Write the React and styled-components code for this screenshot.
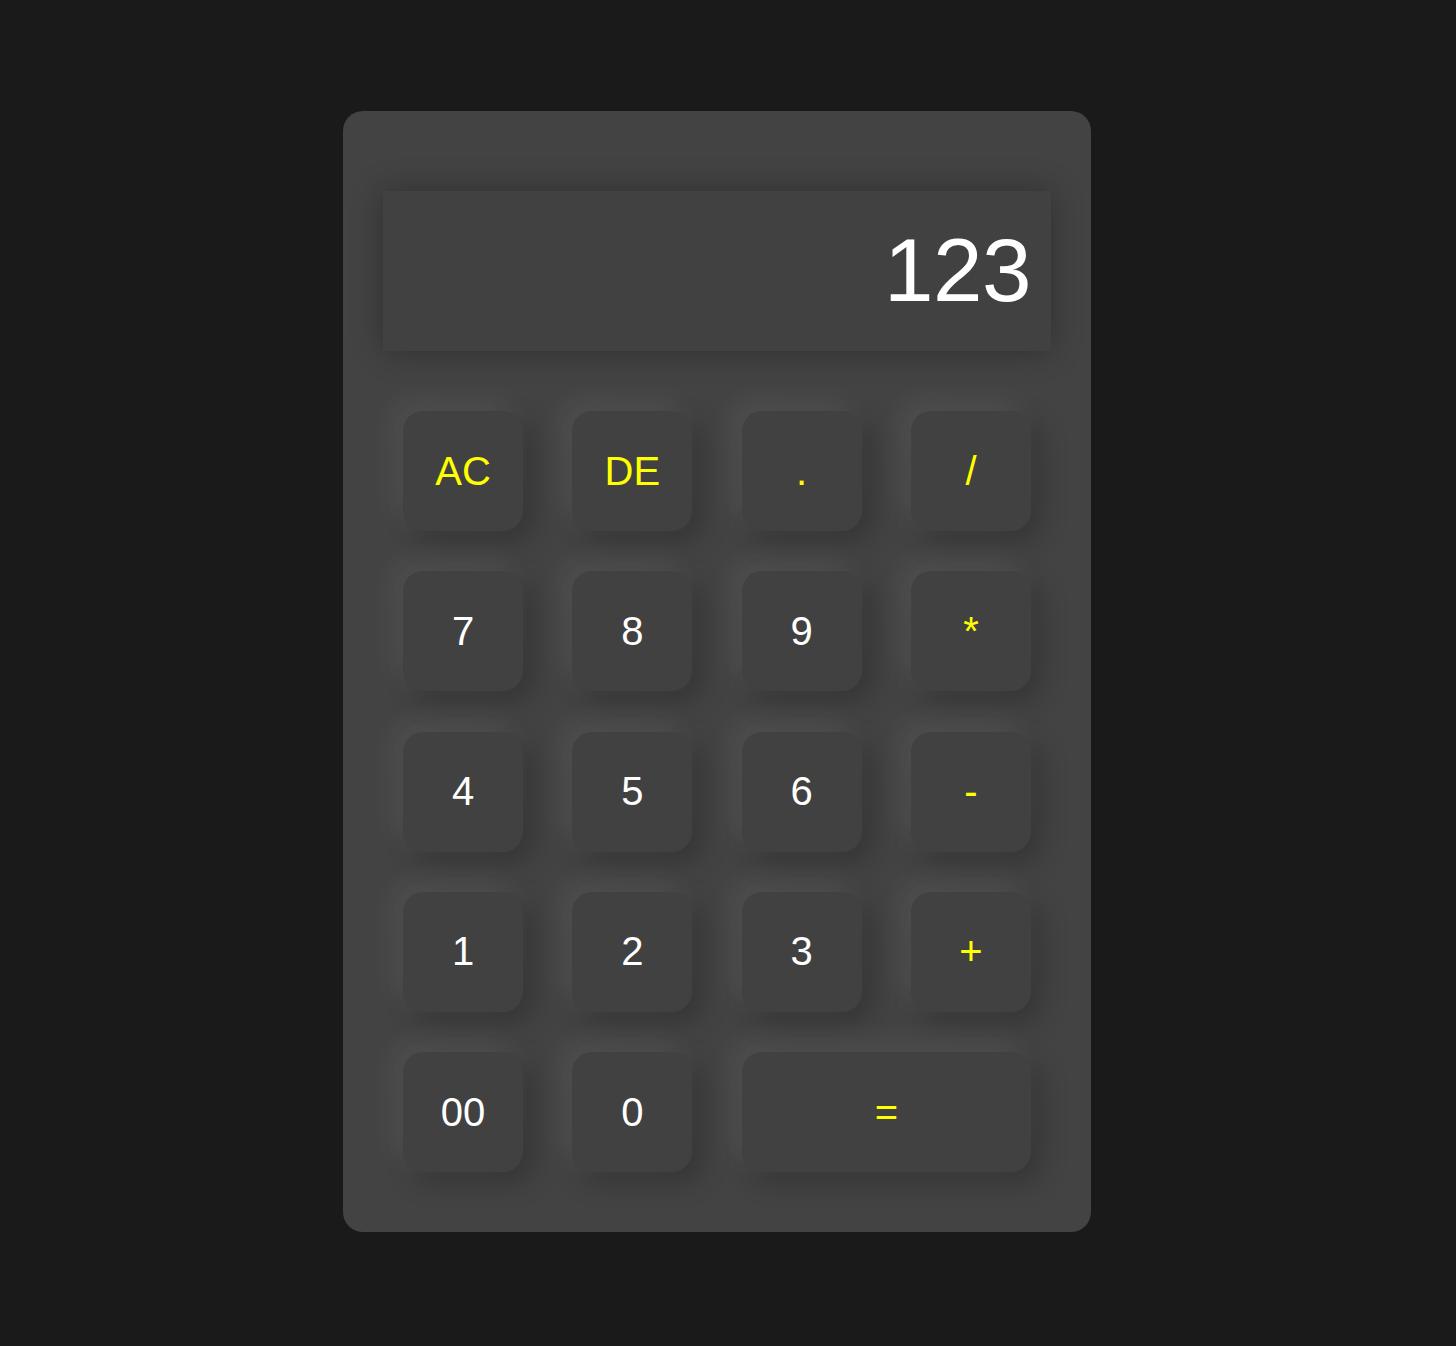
import React from "react";
import styled, { createGlobalStyle } from "styled-components";

const Global = createGlobalStyle`
  html, body { margin: 0; padding: 0; background: #1a1a1a; }
  body { font-family: "Liberation Sans", Arial, sans-serif; }
`;

const Page = styled.div`
  min-height: 1346px;
  padding: 111px 0 0 343px;
  box-sizing: border-box;
`;

const Calculator = styled.div`
  width: 748px;
  box-sizing: border-box;
  padding: 80px 40px 60px;
  background: #434343;
  border-radius: 20px;
  display: flex;
  flex-direction: column;
  gap: 60px;
`;

const Display = styled.div`
  height: 160px;
  box-sizing: border-box;
  padding: 0 20px 2px;
  background: #414141;
  box-shadow: 0 0 30px rgba(0, 0, 0, 0.3);
  display: flex;
  align-items: center;
  justify-content: flex-end;
  color: #ffffff;
  font-size: 89px;
  letter-spacing: -0.5px;
`;

const Keys = styled.div`
  display: grid;
  padding: 0 20px;
  grid-template-columns: repeat(4, 120px);
  grid-auto-rows: 120px;
  column-gap: 49.33px;
  row-gap: 40.25px;
`;

const Key = styled.button`
  grid-column: span ${(p) => p.$span || 1};
  border: none;
  outline: none;
  margin: 0;
  padding: 0;
  border-radius: 20px;
  background: #414141;
  box-shadow: -10px -10px 28px rgba(255, 255, 255, 0.08),
    10px 10px 28px rgba(0, 0, 0, 0.22);
  color: ${(p) => (p.$op ? "#ffff00" : "#ffffff")};
  font-family: "Liberation Sans", Arial, sans-serif;
  font-size: 40px;
  display: flex;
  align-items: center;
  justify-content: center;
  cursor: pointer;
`;

const keys = [
  ["AC", true], ["DE", true], [".", true], ["/", true],
  ["7"], ["8"], ["9"], ["*", true],
  ["4"], ["5"], ["6"], ["-", true],
  ["1"], ["2"], ["3"], ["+", true],
  ["00"], ["0"], ["=", true, 2],
];

export default function App() {
  return (
    <>
      <Global />
      <Page>
        <Calculator>
          <Display>123</Display>
          <Keys>
            {keys.map(([label, op, span]) => (
              <Key key={label} $op={op} $span={span}>
                {label}
              </Key>
            ))}
          </Keys>
        </Calculator>
      </Page>
    </>
  );
}
